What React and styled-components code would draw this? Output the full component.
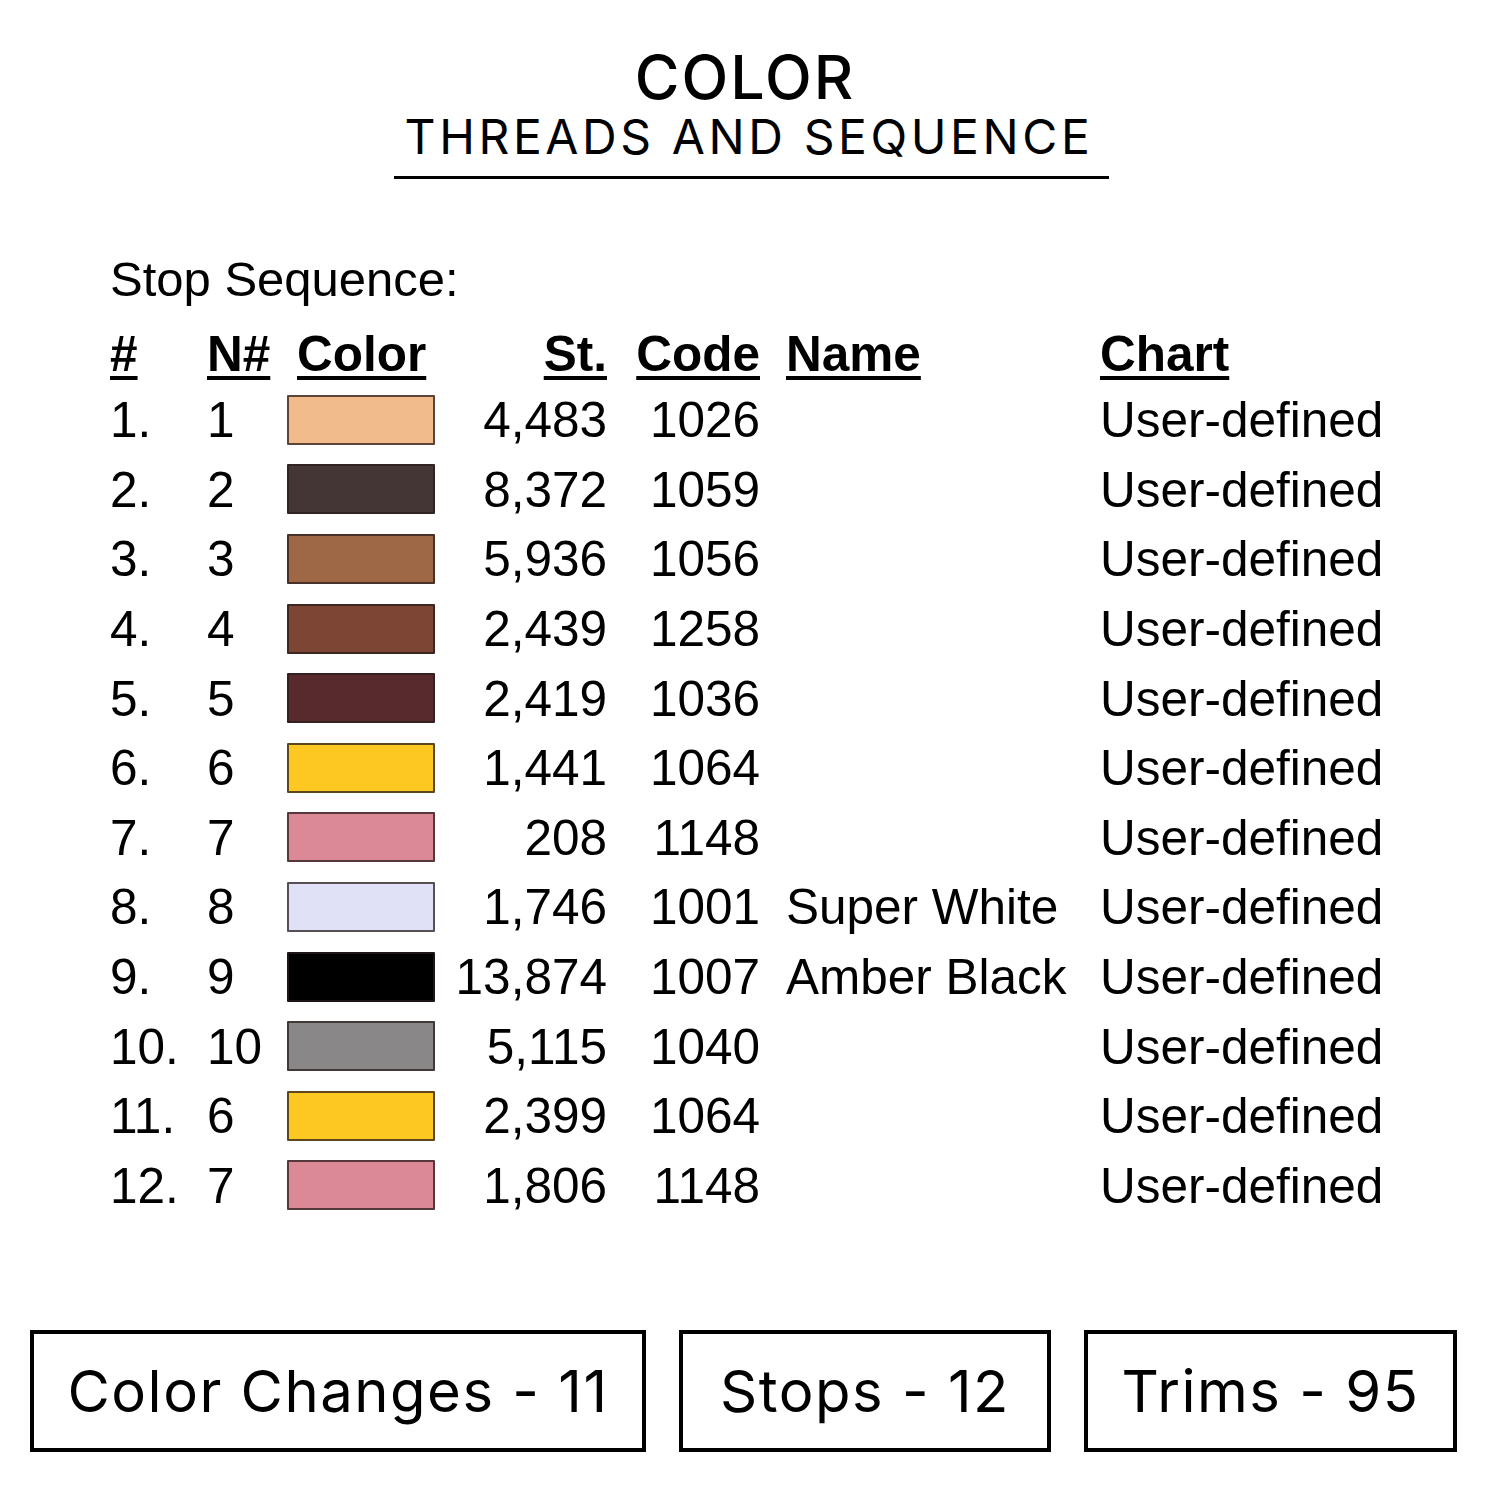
import React from 'react';
import styled, { createGlobalStyle } from 'styled-components';

const GlobalStyle = createGlobalStyle`
  html, body {
    margin: 0;
    padding: 0;
    background: #ffffff;
  }
`;

const rows = [
  { n: 1, needle: 1, color: '#F2BB8B', st: '4,483', code: '1026', name: '' },
  { n: 2, needle: 2, color: '#433634', st: '8,372', code: '1059', name: '' },
  { n: 3, needle: 3, color: '#9E6847', st: '5,936', code: '1056', name: '' },
  { n: 4, needle: 4, color: '#7D4533', st: '2,439', code: '1258', name: '' },
  { n: 5, needle: 5, color: '#582A2D', st: '2,419', code: '1036', name: '' },
  { n: 6, needle: 6, color: '#FCC821', st: '1,441', code: '1064', name: '' },
  { n: 7, needle: 7, color: '#DC8997', st: '208', code: '1148', name: '' },
  { n: 8, needle: 8, color: '#E0E1F7', st: '1,746', code: '1001', name: 'Super White' },
  { n: 9, needle: 9, color: '#000000', st: '13,874', code: '1007', name: 'Amber Black' },
  { n: 10, needle: 10, color: '#8A8789', st: '5,115', code: '1040', name: '' },
  { n: 11, needle: 6, color: '#FCC821', st: '2,399', code: '1064', name: '' },
  { n: 12, needle: 7, color: '#DC8997', st: '1,806', code: '1148', name: '' },
];

const stats = [
  { label: 'Color Changes - 11', width: 616 },
  { label: 'Stops - 12', width: 372 },
  { label: 'Trims - 95', width: 373 },
];

export default function App() {
  return (
    <Page>
      <GlobalStyle />
      <Header>
        <Title>COLOR</Title>
        <Subtitle>THREADS AND SEQUENCE</Subtitle>
        <Rule />
      </Header>

      <Sheet>
        <SheetTitle>Stop Sequence:</SheetTitle>
        <Table>
          <HeadCell>#</HeadCell>
          <HeadCell>N#</HeadCell>
          <HeadCell indent="10px">Color</HeadCell>
          <HeadCell align="right">St.</HeadCell>
          <HeadCell align="right">Code</HeadCell>
          <HeadCell indent="26px">Name</HeadCell>
          <HeadCell>Chart</HeadCell>

          {rows.map(r => (
            <React.Fragment key={r.n}>
              <Cell>{r.n}.</Cell>
              <Cell>{r.needle}</Cell>
              <Cell><Swatch fill={r.color} /></Cell>
              <Cell align="right">{r.st}</Cell>
              <Cell align="right">{r.code}</Cell>
              <Cell indent="26px">{r.name}</Cell>
              <Cell>User-defined</Cell>
            </React.Fragment>
          ))}
        </Table>
      </Sheet>

      <Stats>
        {stats.map(s => (
          <StatBox key={s.label} width={s.width}>{s.label}</StatBox>
        ))}
      </Stats>
    </Page>
  );
}

const Page = styled.div`
  width: 1500px;
  height: 1500px;
  background: #ffffff;
  display: flex;
  flex-direction: column;
  align-items: center;
  color: #000;
`;

const Header = styled.header`
  margin-top: 44px;
  display: flex;
  flex-direction: column;
  align-items: center;
  font-family: Inter, "Noto Sans", sans-serif;
  margin-left: -10px;
`;

const Title = styled.h1`
  margin: 0;
  font-size: 61px;
  font-weight: 500;
  line-height: 66px;
  letter-spacing: 2px;
`;

const Subtitle = styled.h2`
  margin: 0;
  font-size: 48px;
  font-weight: 400;
  line-height: 54px;
  letter-spacing: 3.6px;
  margin-left: 8px;
`;

const Rule = styled.div`
  width: 715px;
  height: 3px;
  background: #000;
  margin-top: 12px;
  margin-left: 12px;
`;

const Sheet = styled.section`
  align-self: stretch;
  padding-left: 110px;
  margin-top: 72px;
  font-family: "Liberation Sans", Arial, sans-serif;
`;

const SheetTitle = styled.div`
  font-size: 49px;
  line-height: 56px;
  height: 56px;
`;

const Table = styled.div`
  display: grid;
  grid-template-columns: 97px 80px 148px 172px 153px 340px auto;
  grid-template-rows: 64px;
  grid-auto-rows: 69.6px;
  margin-top: 14px;
`;

const Cell = styled.div`
  display: flex;
  align-items: center;
  justify-content: ${p => (p.align === 'right' ? 'flex-end' : 'flex-start')};
  padding-left: ${p => p.indent || '0'};
  font-size: 49.5px;
  white-space: nowrap;
`;

const HeadCell = styled(Cell)`
  font-weight: 700;
  text-decoration: underline;
  text-decoration-thickness: 4px;
  text-underline-offset: 5px;
`;

const Swatch = styled.div`
  width: 148px;
  height: 50px;
  box-sizing: border-box;
  background: ${p => p.fill};
  border: 2px solid rgba(40, 30, 30, 0.75);
  border-radius: 1px;
`;

const Stats = styled.div`
  margin-top: auto;
  margin-bottom: 48px;
  display: flex;
  gap: 33px;
  padding-left: 30px;
  align-self: stretch;
`;

const StatBox = styled.div`
  width: ${p => p.width}px;
  height: 122px;
  box-sizing: border-box;
  border: 4px solid #000;
  display: flex;
  align-items: center;
  justify-content: center;
  font-family: Inter, "Noto Sans", sans-serif;
  font-size: 58px;
  font-weight: 400;
  letter-spacing: 1.5px;
`;
